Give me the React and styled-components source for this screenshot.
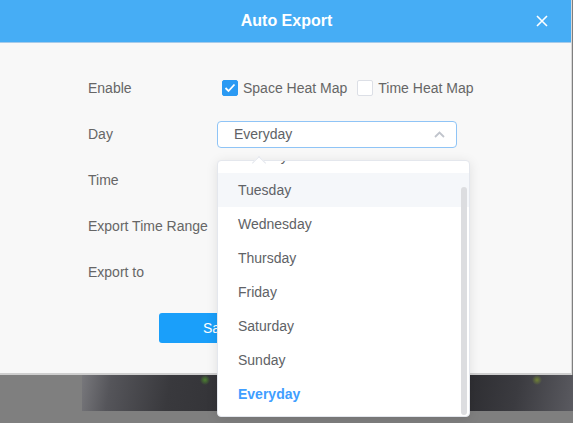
import React from 'react';
import styled, { createGlobalStyle } from 'styled-components';

const Global = createGlobalStyle`
  html, body { margin: 0; padding: 0; background: #7f7f7f; }
  body { font-family: "Liberation Sans", Arial, sans-serif; }
  * { box-sizing: border-box; }
`;

const Page = styled.div`
  width: 573px;
  height: 423px;
  overflow: hidden;
  background: #7f7f7f;
  display: flex;
  flex-direction: column;
`;

const Modal = styled.div`
  width: 572px;
  height: 375px;
  background: #f8f8f8;
  border-bottom: 2px solid #cfcfcf;
  border-right: 1px solid #d8d8d8;
  display: flex;
  flex-direction: column;
  flex-shrink: 0;
`;

const Header = styled.div`
  height: 43px;
  background: #46adf5;
  border-bottom: 1px solid #a6cbea;
  display: flex;
  align-items: center;
  justify-content: center;
  position: relative;
  flex-shrink: 0;
`;

const Title = styled.h1`
  margin: 0;
  color: #fff;
  font-size: 16px;
  font-weight: bold;
  margin-left: 2px;
  margin-top: -1px;
`;

const Close = styled.button`
  position: absolute;
  right: 22px;
  top: 14px;
  width: 14px;
  height: 14px;
  padding: 0;
  border: 0;
  background: none;
  display: flex;
  align-items: center;
  justify-content: center;
`;

const Body = styled.div`
  padding: 22px 0 0 88px;
  display: flex;
  flex-direction: column;
`;

const Form = styled.div`
  display: grid;
  grid-template-columns: 129px 240px;
  grid-auto-rows: 46px;
  align-items: center;
`;

const Label = styled.div`
  font-size: 14px;
  color: #666;
`;

const Checks = styled.div`
  display: flex;
  align-items: center;
  padding-left: 5px;
  white-space: nowrap;
`;

const CheckItem = styled.label`
  display: flex;
  align-items: center;
  font-size: 14px;
  color: #666;
  margin-right: 10px;
`;

const Box = styled.span`
  width: 16px;
  height: 16px;
  border-radius: 2px;
  margin-right: 5px;
  display: flex;
  align-items: center;
  justify-content: center;
  background: ${p => (p.$checked ? '#2b9af3' : '#fff')};
  border: 1px solid ${p => (p.$checked ? '#2b9af3' : '#dcdfe6')};
`;

const SelectWrap = styled.div`
  position: relative;
  width: 240px;
`;

const SelectBox = styled.div`
  height: 27px;
  border: 1px solid #8fc4f6;
  border-radius: 4px;
  background: #fff;
  display: flex;
  align-items: center;
  justify-content: space-between;
  padding: 0 11px 0 16px;
  font-size: 14px;
  color: #606266;
`;

const Dropdown = styled.div`
  position: absolute;
  top: 39px;
  left: 0;
  width: 253px;
  height: 257px;
  background: #fff;
  border: 1px solid #e4e7ed;
  border-radius: 4px;
  box-shadow: 0 2px 12px rgba(0, 0, 0, 0.1);
  z-index: 10;
`;

const Arrow = styled.span`
  position: absolute;
  top: -3px;
  left: 36px;
  width: 10px;
  height: 10px;
  background: #fff;
  border-top: 1px solid #e4e7ed;
  border-left: 1px solid #e4e7ed;
  transform: rotate(45deg);
  z-index: 2;
`;

const Viewport = styled.div`
  height: 100%;
  overflow: hidden;
  border-radius: 4px;
`;

const List = styled.ul`
  list-style: none;
  margin: -22px 0 0;
  padding: 0;
`;

const Item = styled.li`
  height: 34px;
  line-height: 34px;
  padding: 0 20px;
  font-size: 14px;
  color: ${p => (p.$selected ? '#409eff' : '#606266')};
  font-weight: ${p => (p.$selected ? 'bold' : 'normal')};
  background: ${p => (p.$hover ? '#f5f7fa' : 'transparent')};
`;

const Scrollbar = styled.span`
  position: absolute;
  right: 2px;
  top: 26px;
  width: 6px;
  height: 228px;
  border-radius: 3px;
  background: #dcdde0;
  z-index: 3;
`;

const Footer = styled.div`
  padding: 18px 0 0 71px;
  display: flex;
`;

const SaveButton = styled.button`
  width: 120px;
  height: 30px;
  border: 0;
  border-radius: 3px;
  background: #1a9ffa;
  color: #fff;
  font-family: "Liberation Sans", Arial, sans-serif;
  font-size: 14px;
`;

const Scene = styled.div`
  margin-left: 82px;
  height: 36px;
  background:
    radial-gradient(circle at 123px 5px, rgba(90, 180, 40, 0.6) 0, rgba(90, 180, 40, 0) 5px),
    radial-gradient(circle at 455px 5px, rgba(140, 170, 40, 0.6) 0, rgba(140, 170, 40, 0) 5px),
    linear-gradient(100deg, #78787c 0%, #55555a 6%, #39393d 18%, #2c2c30 45%, #2a2a2e 75%, #3b3b40 88%, #5a5a60 100%);
  flex-shrink: 0;
`;

const days = ['Monday', 'Tuesday', 'Wednesday', 'Thursday', 'Friday', 'Saturday', 'Sunday', 'Everyday'];

export default function App() {
  return (
    <Page>
      <Global />
      <Modal>
        <Header>
          <Title>Auto Export</Title>
          <Close aria-label="close">
            <svg width="12" height="12" viewBox="0 0 12 12">
              <path d="M1 1 L11 11 M11 1 L1 11" stroke="#fff" strokeWidth="1.6" />
            </svg>
          </Close>
        </Header>
        <Body>
          <Form>
            <Label>Enable</Label>
            <Checks>
              <CheckItem>
                <Box $checked>
                  <svg width="12" height="10" viewBox="0 0 12 10">
                    <path d="M1.5 5 L4.5 8 L10.5 1.5" stroke="#fff" strokeWidth="1.8" fill="none" />
                  </svg>
                </Box>
                Space Heat Map
              </CheckItem>
              <CheckItem>
                <Box />
                Time Heat Map
              </CheckItem>
            </Checks>
            <Label>Day</Label>
            <SelectWrap>
              <SelectBox>
                <span>Everyday</span>
                <svg width="11" height="7" viewBox="0 0 11 7">
                  <path d="M1 6 L5.5 1.5 L10 6" stroke="#c0c4cc" strokeWidth="1.8" fill="none" />
                </svg>
              </SelectBox>
              <Dropdown>
                <Arrow />
                <Viewport>
                  <List>
                    {days.map(d => (
                      <Item key={d} $hover={d === 'Tuesday'} $selected={d === 'Everyday'}>
                        {d}
                      </Item>
                    ))}
                  </List>
                </Viewport>
                <Scrollbar />
              </Dropdown>
            </SelectWrap>
            <Label>Time</Label>
            <div />
            <Label>Export Time Range</Label>
            <div />
            <Label>Export to</Label>
            <div />
          </Form>
          <Footer>
            <SaveButton>Save</SaveButton>
          </Footer>
        </Body>
      </Modal>
      <Scene />
    </Page>
  );
}
